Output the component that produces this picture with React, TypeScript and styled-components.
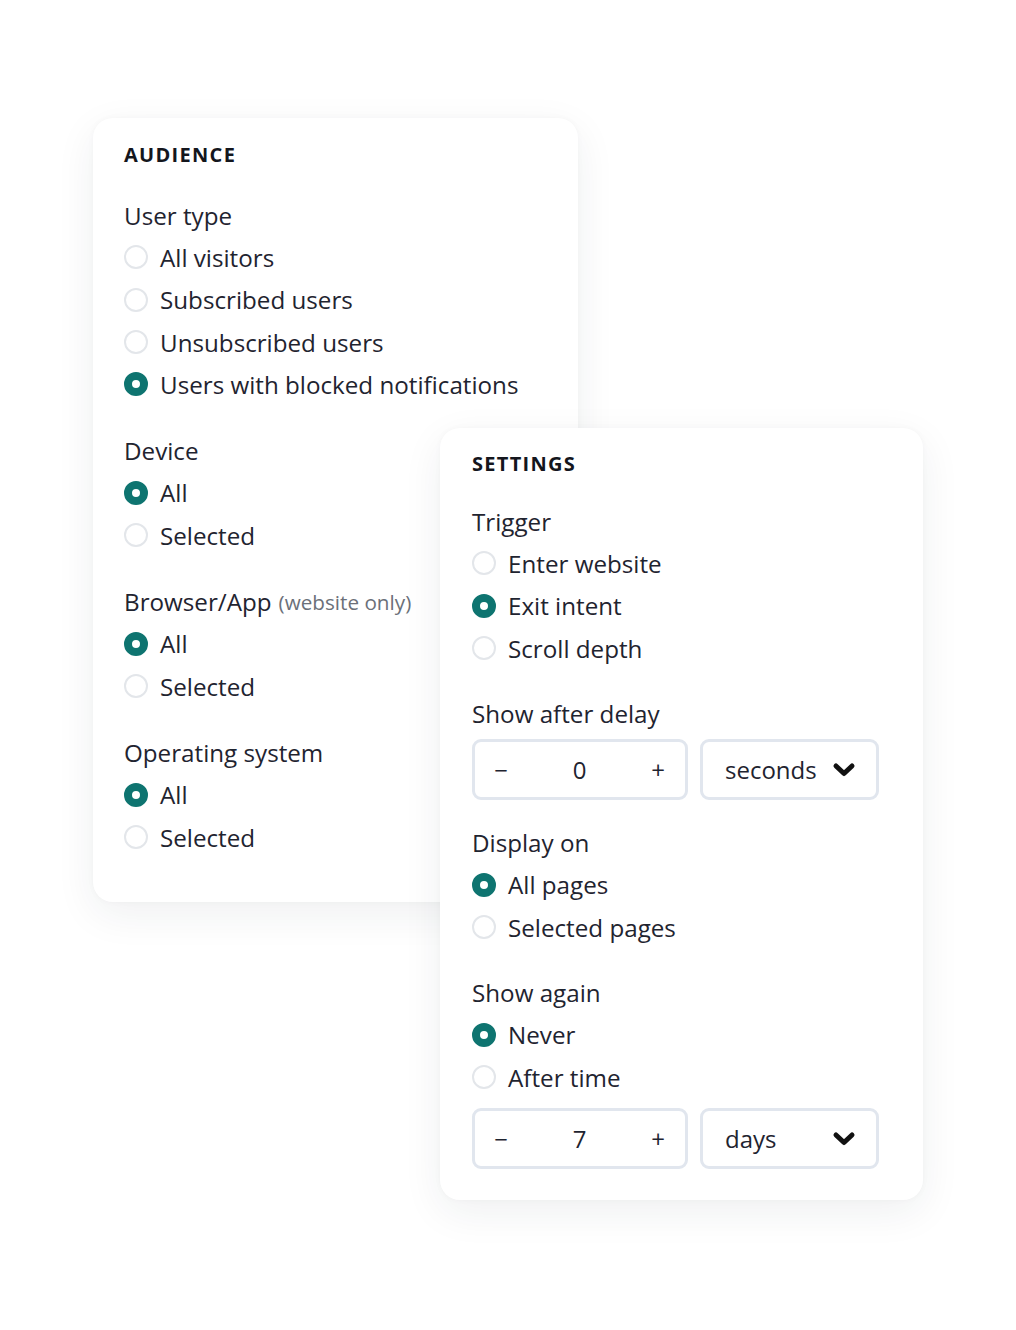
import React from 'react';
import styled, { createGlobalStyle } from 'styled-components';

const GlobalStyle = createGlobalStyle`
  html, body {
    margin: 0;
    padding: 0;
    background: #ffffff;
  }
  body {
    font-family: "Open Sans", "Noto Sans", sans-serif;
    color: #1f2430;
    -webkit-font-smoothing: antialiased;
  }
`;

type Choice = {
  label: string;
  checked?: boolean;
};

type Group = {
  title: string;
  hint?: string;
  choices: Choice[];
};

const audienceGroups: Group[] = [
  {
    title: 'User type',
    choices: [
      { label: 'All visitors' },
      { label: 'Subscribed users' },
      { label: 'Unsubscribed users' },
      { label: 'Users with blocked notifications', checked: true },
    ],
  },
  {
    title: 'Device',
    choices: [{ label: 'All', checked: true }, { label: 'Selected' }],
  },
  {
    title: 'Browser/App',
    hint: '(website only)',
    choices: [{ label: 'All', checked: true }, { label: 'Selected' }],
  },
  {
    title: 'Operating system',
    choices: [{ label: 'All', checked: true }, { label: 'Selected' }],
  },
];

const Radio: React.FC<{ checked?: boolean }> = ({ checked }) => (
  <RadioDot $checked={checked} />
);

const ChoiceLines: React.FC<{ group: Group }> = ({ group }) => (
  <>
    <Line>
      {group.title}
      {group.hint && <Hint>{group.hint}</Hint>}
    </Line>
    {group.choices.map((c) => (
      <Line key={c.label}>
        <Radio checked={c.checked} />
        {c.label}
      </Line>
    ))}
  </>
);

const Chevron = () => (
  <svg width="24" height="16" viewBox="0 0 24 16">
    <path
      d="M4 4 L12 11.5 L20 4"
      fill="none"
      stroke="#111"
      strokeWidth="5"
      strokeLinecap="round"
      strokeLinejoin="round"
    />
  </svg>
);

const Amount: React.FC<{ value: number; unit: string; offset: number }> = ({
  value,
  unit,
  offset,
}) => (
  <InputRow $offset={offset}>
    <Stepper>
      <StepButton>−</StepButton>
      <StepValue>{value}</StepValue>
      <StepButton>+</StepButton>
    </Stepper>
    <UnitSelect>
      <span>{unit}</span>
      <Chevron />
    </UnitSelect>
  </InputRow>
);

const App: React.FC = () => {
  return (
    <>
      <GlobalStyle />
      <Stage>
        <AudienceCard>
          <CardTitle>AUDIENCE</CardTitle>
          {audienceGroups.map((g) => (
            <GroupBlock key={g.title}>
              <ChoiceLines group={g} />
            </GroupBlock>
          ))}
        </AudienceCard>

        <SettingsCard>
          <CardTitle>SETTINGS</CardTitle>
          <GroupBlock $space={21}>
            <ChoiceLines
              group={{
                title: 'Trigger',
                choices: [
                  { label: 'Enter website' },
                  { label: 'Exit intent', checked: true },
                  { label: 'Scroll depth' },
                ],
              }}
            />
          </GroupBlock>
          <GroupBlock $space={23}>
            <Line>Show after delay</Line>
            <Amount value={0} unit="seconds" offset={5} />
          </GroupBlock>
          <GroupBlock $space={21}>
            <ChoiceLines
              group={{
                title: 'Display on',
                choices: [
                  { label: 'All pages', checked: true },
                  { label: 'Selected pages' },
                ],
              }}
            />
          </GroupBlock>
          <GroupBlock $space={23}>
            <ChoiceLines
              group={{
                title: 'Show again',
                choices: [{ label: 'Never', checked: true }, { label: 'After time' }],
              }}
            />
            <Amount value={7} unit="days" offset={10} />
          </GroupBlock>
        </SettingsCard>
      </Stage>
    </>
  );
};

export default App;

const Stage = styled.div`
  position: relative;
  width: 1016px;
  height: 1330px;
  padding: 118px 0 0 93px;
  box-sizing: border-box;
`;

const Card = styled.div`
  box-sizing: border-box;
  background: #ffffff;
  border-radius: 20px;
  box-shadow: 0 12px 40px rgba(30, 40, 60, 0.07), 0 0 6px rgba(30, 40, 60, 0.03);
  display: flex;
  flex-direction: column;
`;

const AudienceCard = styled(Card)`
  width: 485px;
  height: 784px;
  padding: 25px 30px 0 31px;
`;

/* overlaps the audience card */
const SettingsCard = styled(Card)`
  position: absolute;
  left: 440px;
  top: 428px;
  width: 483px;
  height: 772px;
  padding: 24px 32px 0 32px;
`;

const CardTitle = styled.div`
  font-size: 20px;
  line-height: 24px;
  font-weight: 700;
  letter-spacing: 1.3px;
  color: #14161d;
  margin-bottom: 3px;
`;

const GroupBlock = styled.div<{ $space?: number }>`
  display: flex;
  flex-direction: column;
  margin-top: ${(p) => p.$space ?? 24}px;
`;

const Line = styled.div`
  display: flex;
  align-items: center;
  gap: 12px;
  height: 42.3px;
  font-size: 24.2px;
  color: #1f2430;
  white-space: nowrap;
`;

const Hint = styled.span`
  font-size: 20.7px;
  color: #6b7079;
  margin-left: -5px;
`;

const RadioDot = styled.span<{ $checked?: boolean }>`
  box-sizing: border-box;
  flex: none;
  width: 24px;
  height: 24px;
  border-radius: 50%;
  border: ${(p) => (p.$checked ? '8px solid #0e7470' : '2px solid #e3e6ea')};
  background: #ffffff;
`;

const InputRow = styled.div<{ $offset: number }>`
  display: flex;
  gap: 12px;
  margin-top: ${(p) => p.$offset}px;
`;

const Field = styled.div`
  box-sizing: border-box;
  height: 61px;
  border: 3px solid #e1e6ee;
  border-radius: 9px;
  display: flex;
  align-items: center;
  font-size: 24px;
  color: #1f2430;
`;

const Stepper = styled(Field)`
  width: 216px;
  justify-content: space-between;
  padding: 0 16px 0 15px;
`;

const StepButton = styled.span`
  width: 22px;
  text-align: center;
  font-size: 24px;
`;

const StepValue = styled.span`
  flex: 1;
  text-align: center;
`;

const UnitSelect = styled(Field)`
  width: 179px;
  justify-content: space-between;
  padding: 0 20px 0 22px;
`;
